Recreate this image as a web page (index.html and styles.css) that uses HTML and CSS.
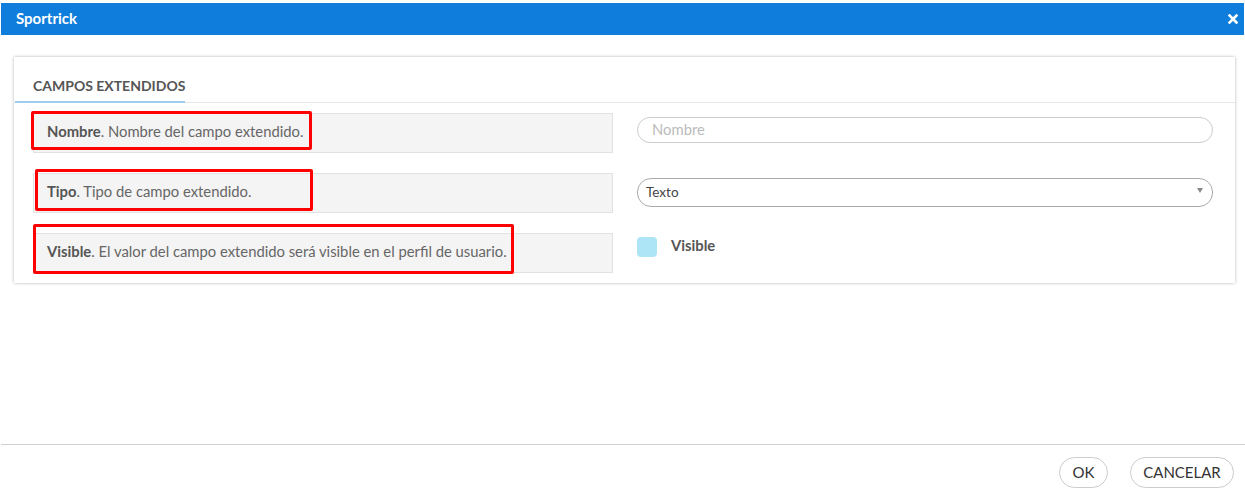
FILE: index.html
```html
<!DOCTYPE html>
<html lang="es">
<head>
<meta charset="utf-8">
<title>Sportrick</title>
<link rel="stylesheet" href="styles.css">
</head>
<body>
<div class="dialog">
  <div class="titlebar">
    <span class="title">Sportrick</span>
    <svg class="close" width="10" height="10" viewBox="0 0 10 10"><path d="M1.5 1.5 L8.5 8.5 M8.5 1.5 L1.5 8.5" stroke="#fff" stroke-width="2.6" stroke-linecap="square"/></svg>
  </div>
  <div class="main">
    <div class="card">
      <div class="tabs"><div class="tab">CAMPOS EXTENDIDOS</div></div>
      <div class="rows">
        <div class="row">
          <div class="label"><b>Nombre</b>. Nombre del campo extendido.<span class="mark mark1"></span></div>
          <div class="field field-input"><div class="input placeholder">Nombre</div></div>
        </div>
        <div class="row">
          <div class="label"><b>Tipo</b>. Tipo de campo extendido.<span class="mark mark2"></span></div>
          <div class="field field-select"><div class="select"><span>Texto</span><span class="arrow"></span></div></div>
        </div>
        <div class="row">
          <div class="label"><b>Visible</b>. El valor del campo extendido será visible en el perfil de usuario.<span class="mark mark3"></span></div>
          <div class="field check"><span class="box"></span><span class="check-label">Visible</span></div>
        </div>
      </div>
    </div>
  </div>
  <div class="footer">
    <button class="btn btn-ok">OK</button>
    <button class="btn btn-cancel">CANCELAR</button>
  </div>
</div>
</body>
</html>
```
FILE: styles.css
```css
* { box-sizing: border-box; }
html, body { margin: 0; padding: 0; background: #fff; }
body { font-family: "Lato", "Open Sans", sans-serif; font-size: 14px; color: #555; }
.dialog { height: 500px; display: flex; flex-direction: column; }
.titlebar {
  margin: 3px 1px 0 1px; height: 32px; background: #0f7ddb;
  display: flex; align-items: center; justify-content: space-between;
  padding: 0 6px 0 15px;
}
.title { color: #fff; font-weight: 700; font-size: 15px; margin-top: -2px; }
.close { display: block; margin-top: -1px; }
.main { flex: 1; padding: 22px 10px 0 14px; }
.card {
  width: 1221px; height: 226px; background: #fff;
  box-shadow: 0 0 3px rgba(0,0,0,0.3);
}
.tabs { height: 46px; border-bottom: 1px solid #e6e6e6; display: flex; align-items: flex-end; padding-left: 1px; }
.tab {
  width: 170px; height: 45px; padding: 19px 0 0 18px; white-space: nowrap;
  font-weight: 700; font-size: 14px; color: #555;
  border-bottom: 2px solid #9fcdf0; margin-bottom: -1px;
}
.rows { padding: 10px 0 0 19px; display: flex; flex-direction: column; gap: 20px; }
.row { display: flex; align-items: flex-start; height: 40px; }
.label {
  position: relative; width: 580px; height: 40px;
  background: #f4f4f4; border: 1px solid #e2e2e2;
  padding: 0 0 5px 13px; display: flex; align-items: center;
  color: #666; white-space: pre; font-size: 14.8px;
}
.label b { color: #555; font-weight: 700; }
.field { margin-left: 24px; width: 576px; }
.field-input { margin-top: 4px; }
.field-select { margin-top: 5px; }
.input {
  height: 26px; border: 1px solid #ccc; border-radius: 13px;
  padding: 0 14px 2px; display: flex; align-items: center; color: #bbb; font-size: 14.8px;
}
.select {
  height: 29px; border: 1px solid #aaa; border-radius: 14px;
  padding: 0 9px 1px 8px; display: flex; align-items: center; justify-content: space-between;
  font-size: 13.5px; color: #444;
}
.arrow {
  width: 0; height: 0; margin-top: -4px;
  border-left: 3.5px solid transparent; border-right: 3.5px solid transparent;
  border-top: 5px solid #888;
}
.check { display: flex; align-items: flex-start; margin-top: 4px; }
.box { width: 20px; height: 20px; border-radius: 4px; background: #ade4f6; }
.check-label { margin-left: 14px; font-weight: 700; color: #555; font-size: 14.8px; line-height: 17px; }
.mark { position: absolute; border: 3px solid #ff0000; border-radius: 2px; pointer-events: none; }
.mark1 { left: -3px; top: -3px; width: 281px; height: 39px; }
.mark2 { left: 1px; top: -5px; width: 278px; height: 42px; }
.mark3 { left: -1px; top: -10px; width: 481px; height: 50px; }
.footer {
  height: 56px; border-top: 1px solid #cfcfcf; margin-left: 1px;
  display: flex; justify-content: flex-end; align-items: flex-start;
  padding: 12px 11px 0 0; gap: 22px;
}
.btn {
  height: 31px; border: 1px solid #ccc; border-radius: 16px; background: #fff;
  font-family: "Lato", "Open Sans", sans-serif; font-size: 15px; color: #333;
  padding: 0 0 1px; cursor: pointer;
}
.btn-ok { width: 49px; }
.btn-cancel { width: 104px; }
```
